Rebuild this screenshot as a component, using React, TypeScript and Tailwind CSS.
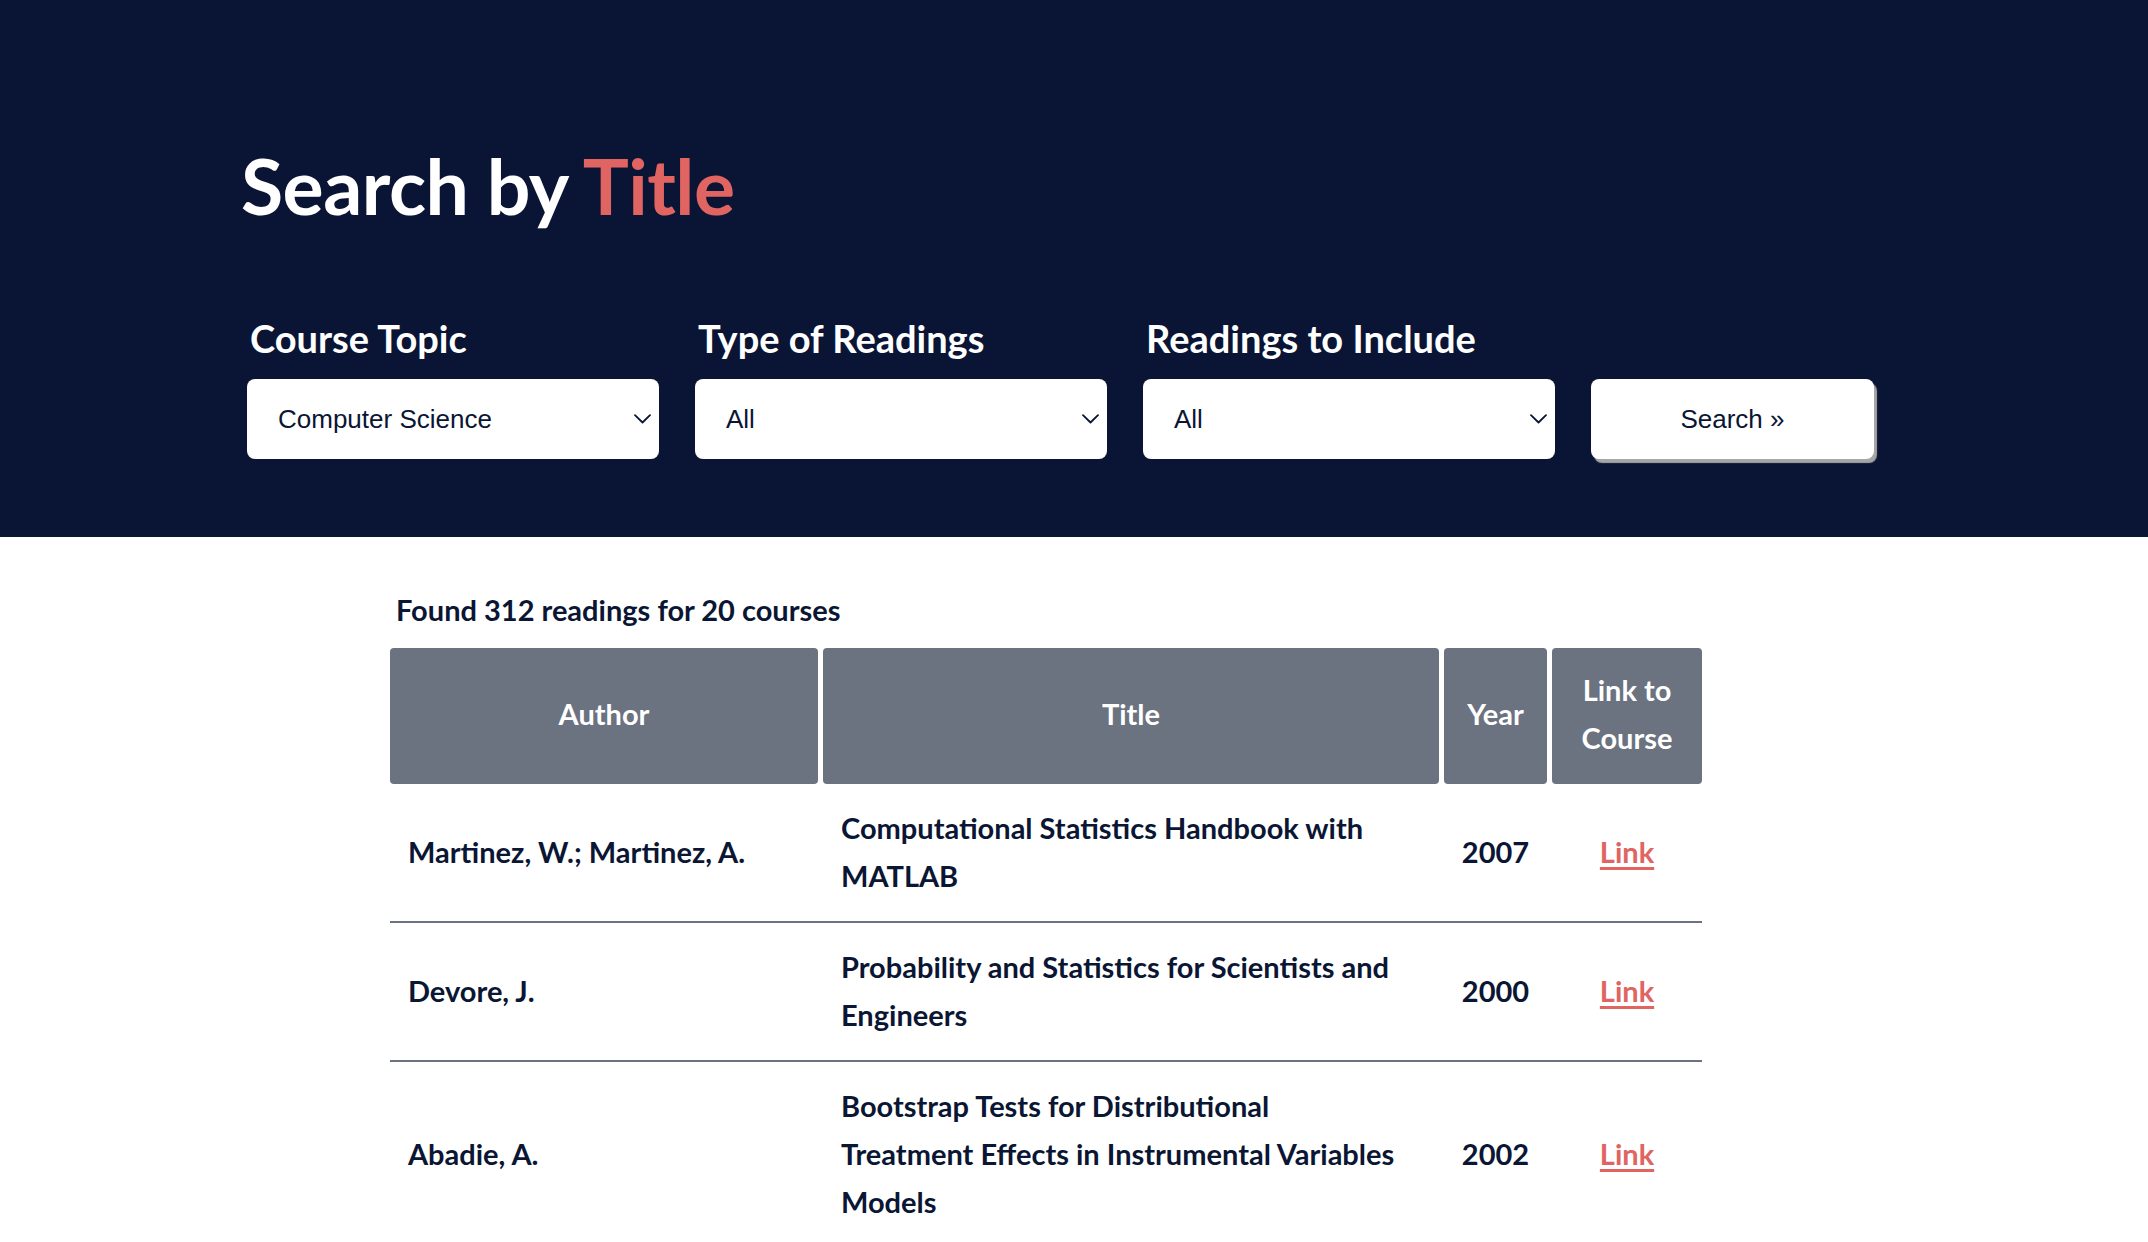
import { ChangeEvent, useState } from "react"

const readings = [
  {
    author: "Martinez, W.; Martinez, A.",
    title: ["Computational Statistics Handbook with", "MATLAB"],
    year: "2007",
  },
  {
    author: "Devore, J.",
    title: ["Probability and Statistics for Scientists and", "Engineers"],
    year: "2000",
  },
  {
    author: "Abadie, A.",
    title: ["Bootstrap Tests for Distributional", "Treatment Effects in Instrumental Variables", "Models"],
    year: "2002",
  },
]

function Chevron() {
  return (
    <svg
      className="pointer-events-none absolute right-[8px] top-1/2 -translate-y-1/2"
      width="17"
      height="10"
      viewBox="0 0 17 10"
      fill="none"
    >
      <path d="M1 1.2l7.5 7.3L16 1.2" stroke="#0a1633" strokeWidth="1.8" strokeLinecap="round" strokeLinejoin="round" />
    </svg>
  )
}

function Field({
  label,
  value,
  options,
  onChange,
}: {
  label: string
  value: string
  options: string[]
  onChange: (e: ChangeEvent<HTMLSelectElement>) => void
}) {
  return (
    <div className="w-[412px]">
      <label className="block pl-[3px] text-[38px] leading-none font-bold text-white">{label}</label>
      <div className="relative mt-[22px]">
        <select
          value={value}
          onChange={onChange}
          className="h-[80px] w-full appearance-none rounded-[8px] bg-white pl-[31px] pr-[40px] font-['Liberation_Sans',Arial,sans-serif] text-[26px] text-[#0a1633] outline-none"
        >
          {options.map((o) => (
            <option key={o}>{o}</option>
          ))}
        </select>
        <Chevron />
      </div>
    </div>
  )
}

export default function App() {
  const [topic, setTopic] = useState("Computer Science")
  const [type, setType] = useState("All")
  const [include, setInclude] = useState("All")

  return (
    <div className="min-h-screen bg-white font-['Lato',sans-serif] text-[#0a1633]">
      <header className="h-[537px] bg-[#0a1535] pl-[241px] pt-[147px]">
        <h1 className="text-[77px] leading-none font-bold tracking-[-0.5px] text-white">
          Search by <span className="text-[#e06461]">Title</span>
        </h1>
        <div className="mt-[95px] ml-[6px] flex items-end gap-[36px]">
          <Field
            label="Course Topic"
            value={topic}
            options={["Computer Science", "Economics", "Mathematics", "Statistics"]}
            onChange={(e) => setTopic(e.target.value)}
          />
          <Field
            label="Type of Readings"
            value={type}
            options={["All", "Books", "Articles"]}
            onChange={(e) => setType(e.target.value)}
          />
          <Field
            label="Readings to Include"
            value={include}
            options={["All", "Required", "Optional"]}
            onChange={(e) => setInclude(e.target.value)}
          />
          <button className="h-[80px] w-[283px] rounded-[8px] bg-white font-['Liberation_Sans',Arial,sans-serif] text-[26px] text-[#0a1633] shadow-[3px_4px_1px_#a6a6a6]">
            Search »
          </button>
        </div>
      </header>

      <main className="pl-[390px] pt-[58px]">
        <p className="pl-[6px] text-[29px] leading-none font-bold">Found 312 readings for 20 courses</p>

        <div className="mt-[24px] w-[1312px]">
          <div className="grid grid-cols-[428px_616px_103px_150px] gap-x-[5px] text-[29px] leading-[48px] font-bold text-white">
            <div className="flex h-[136px] items-center justify-center rounded-[4px] bg-[#6b7280] pb-[4px]">Author</div>
            <div className="flex h-[136px] items-center justify-center rounded-[4px] bg-[#6b7280] pb-[4px]">Title</div>
            <div className="flex h-[136px] items-center justify-center rounded-[4px] bg-[#6b7280] pb-[4px]">Year</div>
            <div className="flex h-[136px] items-center justify-center rounded-[4px] bg-[#6b7280] pb-[4px] text-center">
              Link to
              <br />
              Course
            </div>
          </div>

          {readings.map((r) => (
            <div
              key={r.author}
              className="grid grid-cols-[428px_616px_103px_150px] items-center gap-x-[5px] border-b-2 border-[#6b7280] pt-[20px] pb-[21px] text-[29px] leading-[48px] font-bold"
            >
              <div className="pl-[18px]">{r.author}</div>
              <div className="pl-[18px] whitespace-nowrap">
                {r.title.map((line) => (
                  <div key={line}>{line}</div>
                ))}
              </div>
              <div className="text-center">{r.year}</div>
              <div className="text-center">
                <a href="#" className="text-[#e06461] underline decoration-[3px] underline-offset-[4px]">
                  Link
                </a>
              </div>
            </div>
          ))}
        </div>
      </main>
    </div>
  )
}
